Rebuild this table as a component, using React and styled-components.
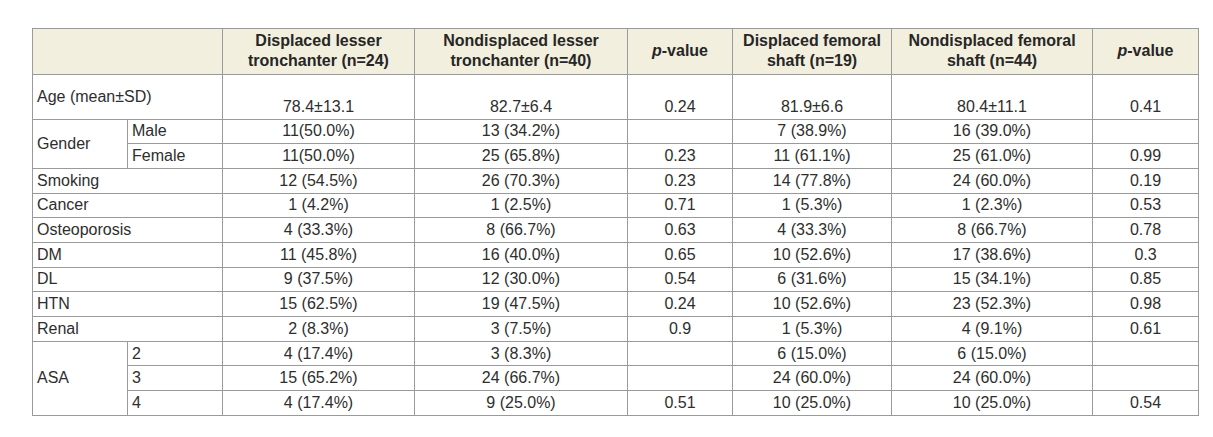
import React from 'react';
import styled, { createGlobalStyle } from 'styled-components';

const GlobalStyle = createGlobalStyle`
  body {
    margin: 0;
    background: #fff;
  }
`;

const Page = styled.div`
  padding: 28px 0 0 32px;
  font-family: "Liberation Sans", Arial, sans-serif;
`;

const Table = styled.table`
  border-collapse: collapse;
  table-layout: fixed;
  width: 1167px;
  font-size: 16px;
  line-height: 20px;
  color: #2e2e2e;
`;

const HeadRow = styled.tr`
  height: 45.5px;
  background: #f2efdf;
`;

const BodyRow = styled.tr`
  height: ${p => (p.tall ? '45px' : '24.7px')};
`;

const Th = styled.th`
  border: 1px solid #9a9a9a;
  font-weight: bold;
  color: #262626;
  text-align: center;
  vertical-align: middle;
  padding: 0 6px;
`;

const Label = styled.td`
  border: 1px solid #9a9a9a;
  text-align: left;
  vertical-align: middle;
  padding: 0 4px;
  white-space: nowrap;
`;

const Cell = styled.td`
  border: 1px solid #9a9a9a;
  text-align: center;
  vertical-align: middle;
  padding: 0 4px;
  white-space: nowrap;
`;

const widths = [95, 95, 192, 213, 105, 159, 201, 106];

const PValue = () => (
  <>
    <i>p</i>-value
  </>
);

const simpleRows = [
  ['Smoking', '12 (54.5%)', '26 (70.3%)', '0.23', '14 (77.8%)', '24 (60.0%)', '0.19'],
  ['Cancer', '1 (4.2%)', '1 (2.5%)', '0.71', '1 (5.3%)', '1 (2.3%)', '0.53'],
  ['Osteoporosis', '4 (33.3%)', '8 (66.7%)', '0.63', '4 (33.3%)', '8 (66.7%)', '0.78'],
  ['DM', '11 (45.8%)', '16 (40.0%)', '0.65', '10 (52.6%)', '17 (38.6%)', '0.3'],
  ['DL', '9 (37.5%)', '12 (30.0%)', '0.54', '6 (31.6%)', '15 (34.1%)', '0.85'],
  ['HTN', '15 (62.5%)', '19 (47.5%)', '0.24', '10 (52.6%)', '23 (52.3%)', '0.98'],
  ['Renal', '2 (8.3%)', '3 (7.5%)', '0.9', '1 (5.3%)', '4 (9.1%)', '0.61'],
];

const genderRows = [
  ['Male', '11(50.0%)', '13 (34.2%)', '', '7 (38.9%)', '16 (39.0%)', ''],
  ['Female', '11(50.0%)', '25 (65.8%)', '0.23', '11 (61.1%)', '25 (61.0%)', '0.99'],
];

const asaRows = [
  ['2', '4 (17.4%)', '3 (8.3%)', '', '6 (15.0%)', '6 (15.0%)', ''],
  ['3', '15 (65.2%)', '24 (66.7%)', '', '24 (60.0%)', '24 (60.0%)', ''],
  ['4', '4 (17.4%)', '9 (25.0%)', '0.51', '10 (25.0%)', '10 (25.0%)', '0.54'],
];

const GroupRows = ({ title, rows }) =>
  rows.map(([sub, ...vals], i) => (
    <BodyRow key={sub}>
      {i === 0 && <Label rowSpan={rows.length}>{title}</Label>}
      <Label>{sub}</Label>
      {vals.map((v, j) => (
        <Cell key={j}>{v}</Cell>
      ))}
    </BodyRow>
  ));

const App = () => (
  <Page>
    <GlobalStyle />
    <Table>
      <colgroup>
        {widths.map((w, i) => (
          <col key={i} style={{ width: w }} />
        ))}
      </colgroup>
      <thead>
        <HeadRow>
          <Th colSpan={2} />
          <Th>Displaced lesser<br />tronchanter (n=24)</Th>
          <Th>Nondisplaced lesser<br />tronchanter (n=40)</Th>
          <Th><PValue /></Th>
          <Th>Displaced femoral<br />shaft (n=19)</Th>
          <Th>Nondisplaced femoral<br />shaft (n=44)</Th>
          <Th><PValue /></Th>
        </HeadRow>
      </thead>
      <tbody>
        <BodyRow tall>
          <Label colSpan={2}>Age (mean±SD)</Label>
          <Cell><br />78.4±13.1</Cell>
          <Cell><br />82.7±6.4</Cell>
          <Cell><br />0.24</Cell>
          <Cell><br />81.9±6.6</Cell>
          <Cell><br />80.4±11.1</Cell>
          <Cell><br />0.41</Cell>
        </BodyRow>
        <GroupRows title="Gender" rows={genderRows} />
        {simpleRows.map(([label, ...vals]) => (
          <BodyRow key={label}>
            <Label colSpan={2}>{label}</Label>
            {vals.map((v, j) => (
              <Cell key={j}>{v}</Cell>
            ))}
          </BodyRow>
        ))}
        <GroupRows title="ASA" rows={asaRows} />
      </tbody>
    </Table>
  </Page>
);

export default App;
